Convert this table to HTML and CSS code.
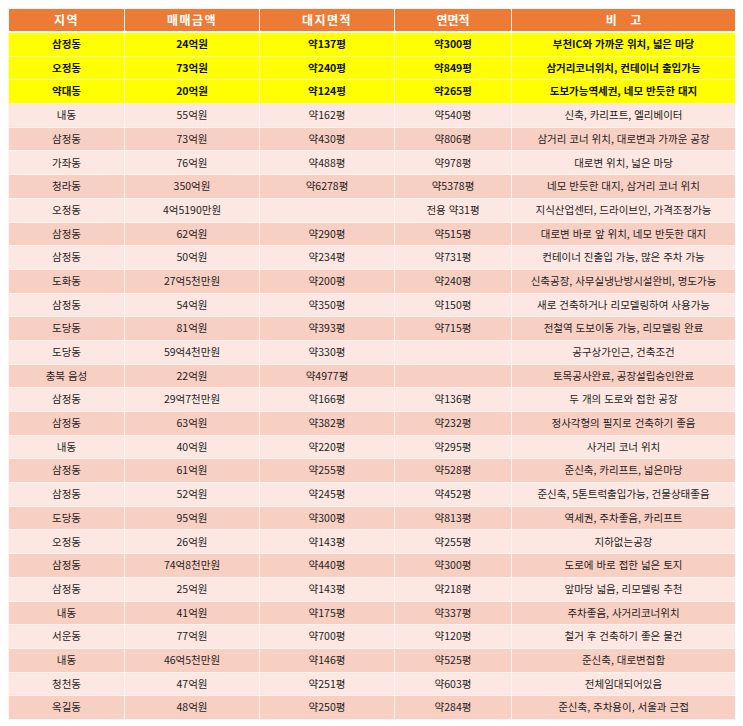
FILE: index.html
```html
<!DOCTYPE html>
<html lang="ko">
<head>
<meta charset="utf-8">
<title>매물 목록</title>
<link rel="stylesheet" href="styles.css">
</head>
<body>
<table class="list">
  <colgroup>
    <col class="c1"><col class="c2"><col class="c3"><col class="c4"><col class="c5">
  </colgroup>
  <thead>
    <tr><th class="sp">지역</th><th class="sp">매매금액</th><th class="sp">대지면적</th><th>연면적</th><th>비&nbsp;&nbsp;&nbsp;&nbsp;고</th></tr>
  </thead>
  <tbody>
    <tr class="hl"><td>삼정동</td><td>24억원</td><td>약137평</td><td>약300평</td><td>부천IC와 가까운 위치, 넓은 마당</td></tr>
    <tr class="hl"><td>오정동</td><td>73억원</td><td>약240평</td><td>약849평</td><td>삼거리코너위치, 컨테이너 출입가능</td></tr>
    <tr class="hl"><td>약대동</td><td>20억원</td><td>약124평</td><td>약265평</td><td>도보가능역세권, 네모 반듯한 대지</td></tr>
    <tr class="lt"><td>내동</td><td>55억원</td><td>약162평</td><td>약540평</td><td>신축, 카리프트, 엘리베이터</td></tr>
    <tr class="dk"><td>삼정동</td><td>73억원</td><td>약430평</td><td>약806평</td><td>삼거리 코너 위치, 대로변과 가까운 공장</td></tr>
    <tr class="lt"><td>가좌동</td><td>76억원</td><td>약488평</td><td>약978평</td><td>대로변 위치, 넓은 마당</td></tr>
    <tr class="dk"><td>청라동</td><td>350억원</td><td>약6278평</td><td>약5378평</td><td>네모 반듯한 대지, 삼거리 코너 위치</td></tr>
    <tr class="lt"><td>오정동</td><td>4억5190만원</td><td></td><td>전용 약31평</td><td>지식산업센터, 드라이브인, 가격조정가능</td></tr>
    <tr class="dk"><td>삼정동</td><td>62억원</td><td>약290평</td><td>약515평</td><td>대로변 바로 앞 위치, 네모 반듯한 대지</td></tr>
    <tr class="lt"><td>삼정동</td><td>50억원</td><td>약234평</td><td>약731평</td><td>컨테이너 진출입 가능, 많은 주차 가능</td></tr>
    <tr class="dk"><td>도화동</td><td>27억5천만원</td><td>약200평</td><td>약240평</td><td>신축공장, 사무실냉난방시설완비, 명도가능</td></tr>
    <tr class="lt"><td>삼정동</td><td>54억원</td><td>약350평</td><td>약150평</td><td>새로 건축하거나 리모델링하여 사용가능</td></tr>
    <tr class="dk"><td>도당동</td><td>81억원</td><td>약393평</td><td>약715평</td><td>전철역 도보이동 가능, 리모델링 완료</td></tr>
    <tr class="lt"><td>도당동</td><td>59억4천만원</td><td>약330평</td><td></td><td>공구상가인근, 건축조건</td></tr>
    <tr class="dk"><td>충북 음성</td><td>22억원</td><td>약4977평</td><td></td><td>토목공사완료, 공장설립승인완료</td></tr>
    <tr class="lt"><td>삼정동</td><td>29억7천만원</td><td>약166평</td><td>약136평</td><td>두 개의 도로와 접한 공장</td></tr>
    <tr class="dk"><td>삼정동</td><td>63억원</td><td>약382평</td><td>약232평</td><td>정사각형의 필지로 건축하기 좋음</td></tr>
    <tr class="lt"><td>내동</td><td>40억원</td><td>약220평</td><td>약295평</td><td>사거리 코너 위치</td></tr>
    <tr class="dk"><td>삼정동</td><td>61억원</td><td>약255평</td><td>약528평</td><td>준신축, 카리프트, 넓은마당</td></tr>
    <tr class="lt"><td>삼정동</td><td>52억원</td><td>약245평</td><td>약452평</td><td>준신축, 5톤트럭출입가능, 건물상태좋음</td></tr>
    <tr class="dk"><td>도당동</td><td>95억원</td><td>약300평</td><td>약813평</td><td>역세권, 주차좋음, 카리프트</td></tr>
    <tr class="lt"><td>오정동</td><td>26억원</td><td>약143평</td><td>약255평</td><td>지하없는공장</td></tr>
    <tr class="dk"><td>삼정동</td><td>74억8천만원</td><td>약440평</td><td>약300평</td><td>도로에 바로 접한 넓은 토지</td></tr>
    <tr class="lt"><td>삼정동</td><td>25억원</td><td>약143평</td><td>약218평</td><td>앞마당 넓음, 리모델링 추천</td></tr>
    <tr class="dk"><td>내동</td><td>41억원</td><td>약175평</td><td>약337평</td><td>주차좋음, 사거리코너위치</td></tr>
    <tr class="lt"><td>서운동</td><td>77억원</td><td>약700평</td><td>약120평</td><td>철거 후 건축하기 좋은 물건</td></tr>
    <tr class="dk"><td>내동</td><td>46억5천만원</td><td>약146평</td><td>약525평</td><td>준신축, 대로변접함</td></tr>
    <tr class="lt"><td>청천동</td><td>47억원</td><td>약251평</td><td>약603평</td><td>전체임대되어있음</td></tr>
    <tr class="dk"><td>옥길동</td><td>48억원</td><td>약250평</td><td>약284평</td><td>준신축, 주차용이, 서울과 근접</td></tr>
  </tbody>
</table>
</body>
</html>
```
FILE: styles.css
```css
html, body {
  background: #ffffff;
}
body {
  margin: 8px;
  font-family: "Noto Sans CJK KR", "Noto Sans", sans-serif;
  color: #1e1e1e;
}
.list {
  width: 727px;
  border-collapse: collapse;
  table-layout: fixed;
}
.c1 { width: 116px; }
.c2 { width: 135px; }
.c3 { width: 135px; }
.c4 { width: 117px; }
.c5 { width: 224px; }

.list th,
.list td {
  padding: 0;
  text-align: center;
  vertical-align: middle;
  white-space: nowrap;
  border: 1px solid #fdf4f1;
  line-height: 1;
}
.list th {
  background: #ec7c35;
  color: #ffffff;
  font-size: 12px;
  font-weight: 700;
  height: 22px;
  border-bottom: 2px solid #ffffff;
}
.list th.sp {
  letter-spacing: 1.5px;
}
.list td {
  font-size: 10.5px;
  height: 22.7px;
}
.hl td {
  background: #ffff00;
  font-weight: 700;
  color: #111111;
  border-color: #fafab0;
}
.lt td {
  background: #fce7e2;
}
.dk td {
  background: #f7cfc3;
}
```
